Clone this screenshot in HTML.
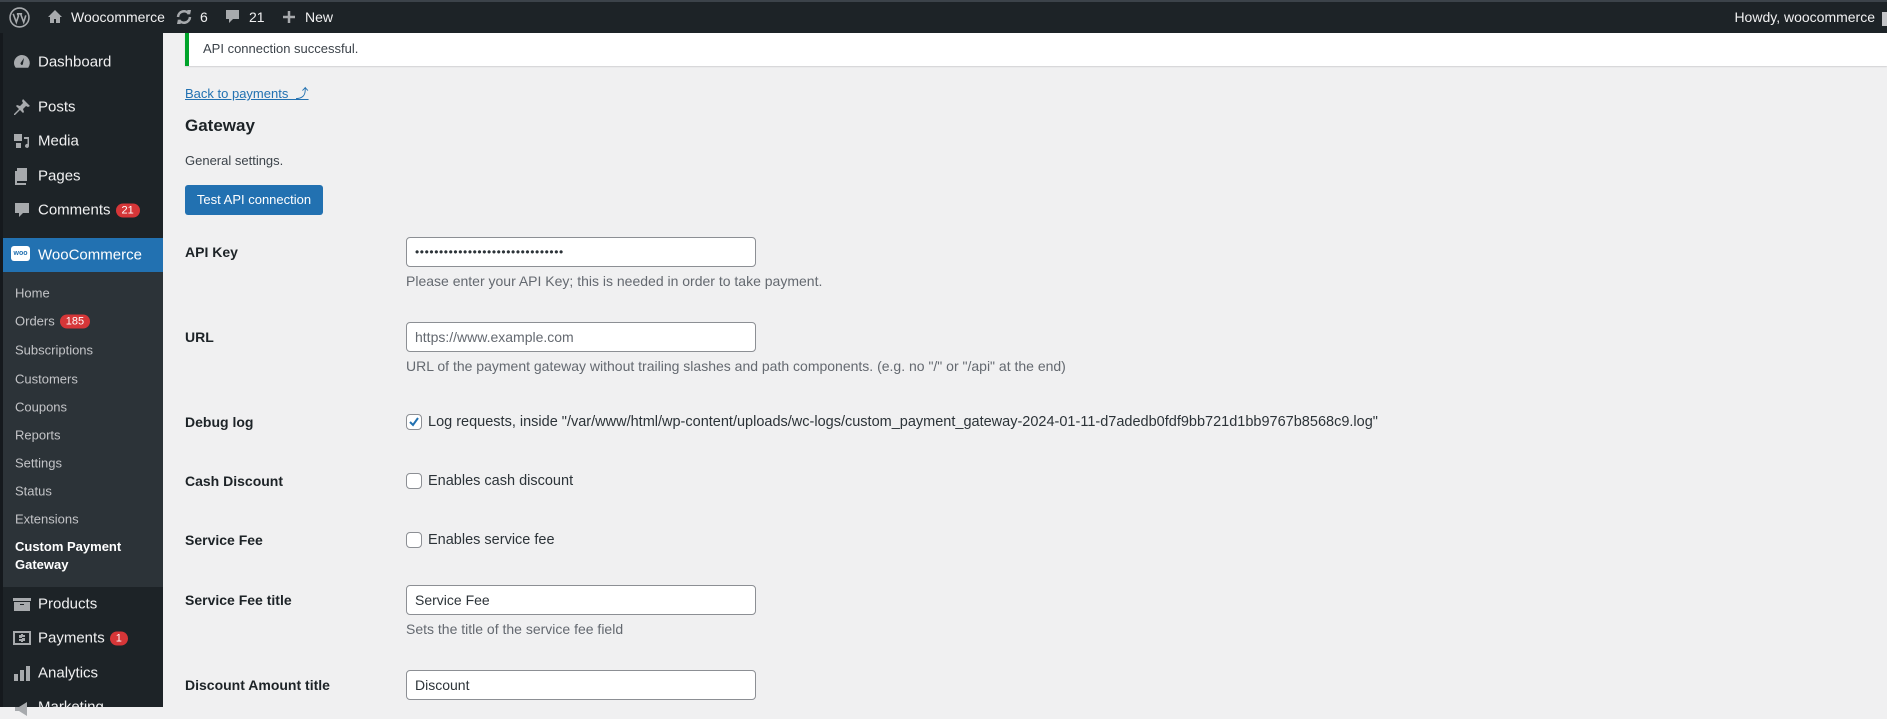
<!DOCTYPE html>
<html style="background:#f0f0f1"><head><meta charset="utf-8"><style>
*{margin:0;padding:0;box-sizing:border-box}
body{width:1887px;height:707px;overflow:hidden;background:#f0f0f1;font-family:"Liberation Sans",sans-serif;color:#1d2327;position:relative}
.abs{position:absolute;white-space:nowrap}
#top{position:absolute;left:0;top:0;width:1887px;height:33px;background:#1d2327;border-top:2px solid #3c434a;color:#f0f0f1;font-size:14px}
#side{position:absolute;left:0;top:33px;width:163px;height:674px;background:#1d2327;border-left:3px solid #15191d}
.mi{position:absolute;left:35px;color:#f0f0f1;font-size:15px;transform:translateY(-50%)}
.ic{position:absolute;left:9px;width:20px;height:20px;transform:translateY(-50%);fill:#a7aaad}
.sub{position:absolute;left:12px;color:#c3c4c7;font-size:13px;transform:translateY(-50%)}
.badge{display:inline-block;background:#d63638;color:#fff;border-radius:9px;font-size:11px;padding:1px 6px;margin-left:5px;vertical-align:1px}
.lab{position:absolute;left:185px;font-weight:bold;font-size:14px;transform:translateY(-50%)}
.inp{position:absolute;left:406px;width:350px;height:30px;background:#fff;border:1px solid #8c8f94;border-radius:4px;font-size:14px;padding:6px 8px;color:#2c3338}
.desc{position:absolute;left:406px;color:#646970;font-size:14px;transform:translateY(-50%)}
.cb{position:absolute;left:406px;width:16px;height:16px;border:1px solid #8c8f94;border-radius:4px;background:#fff;transform:translateY(-50%)}
.cbl{position:absolute;left:428px;font-size:14.5px;color:#2c3338;transform:translateY(-50%)}
</style></head><body>
<div id="top">
<svg class="abs" style="left:9px;top:5px" width="21" height="21" viewBox="0 0 20 20"><circle cx="10" cy="10" r="9" fill="none" stroke="#a7aaad" stroke-width="1.5"/><path d="M4 6.5l3 8 2-6-1-2m-0.5 0h5m-1.5 0l3 8 2-6.5" fill="none" stroke="#a7aaad" stroke-width="1.5"/></svg>
<svg class="abs" style="left:47px;top:7px" width="16" height="15" viewBox="0 0 16 15"><path d="M8 1L1 8h2v6h4v-4h2v4h4V8h2z" fill="#a7aaad"/></svg>
<span class="abs" style="left:71px;top:7px">Woocommerce</span>
<svg class="abs" style="left:175px;top:7px" width="18" height="16" viewBox="0 0 18 16"><path d="M3 8a6 6 0 0 1 11-3M15 8a6 6 0 0 1-11 3" fill="none" stroke="#a7aaad" stroke-width="2.5"/><path d="M12 1l4 0-1 5zM6 15l-4 0 1-5z" fill="#a7aaad"/></svg>
<span class="abs" style="left:200px;top:7px">6</span>
<svg class="abs" style="left:225px;top:7px" width="15" height="16" viewBox="0 0 15 16"><path d="M1 1h13v9H8l-4 4v-4H1z" fill="#a7aaad"/></svg>
<span class="abs" style="left:249px;top:7px">21</span>
<svg class="abs" style="left:282px;top:8px" width="14" height="14" viewBox="0 0 14 14"><path d="M7 1v12M1 7h12" stroke="#a7aaad" stroke-width="2.5"/></svg>
<span class="abs" style="left:305px;top:7px">New</span>
<span class="abs" style="right:12px;top:7px">Howdy, woocommerce</span>
<div class="abs" style="left:1882px;top:10px;width:8px;height:14px;background:#c3c4c7"></div>
</div>

<div id="side">
<svg class="ic" style="top:29px" viewBox="0 0 20 20"><path d="M10 3a8 8 0 0 0-8 8c0 2 .7 3.5 1.8 4.7h12.4A8 8 0 0 0 10 3zm0 10a1.5 1.5 0 0 1-1-2.6L12 6l-1 5.5A1.5 1.5 0 0 1 10 13z"/></svg>
<div class="mi" style="top:29px">Dashboard</div>
<svg class="ic" style="top:74px" viewBox="0 0 20 20"><path d="M11 2l7 7-2 1-2-1-3 3 1 3-1 1-3-3-5 5-1 0 0-1 5-5-3-3 1-1 3 1 3-3-1-2z"/></svg>
<div class="mi" style="top:74px">Posts</div>
<svg class="ic" style="top:108px" viewBox="0 0 20 20"><path d="M2 3h8v7H2zM12 6h5v9a2 2 0 1 1-1.5-2V8H12zM4 12h5v5H4z"/></svg>
<div class="mi" style="top:108px">Media</div>
<svg class="ic" style="top:143px" viewBox="0 0 20 20"><path d="M5 2h10v13H5zM3 5v14h11v-2H5V5z"/></svg>
<div class="mi" style="top:143px">Pages</div>
<svg class="ic" style="top:177px" viewBox="0 0 20 20"><path d="M3 3h14v10h-6l-4 4v-4H3z"/></svg>
<div class="mi" style="top:177px">Comments<span class="badge">21</span></div>
<div class="abs" style="left:0;top:205px;width:160px;height:34px;background:#2271b1"></div>
<div class="abs" style="left:155px;top:215px;width:0;height:0;border:7px solid transparent;border-right-color:#f0f0f1"></div>
<div class="abs" style="left:8px;top:213px;width:19px;height:15px;background:#fff;border-radius:3px;color:#2271b1;font-size:7px;font-weight:bold;text-align:center;line-height:15px">woo</div>
<div class="mi" style="top:222px;color:#fff">WooCommerce</div>
<div class="abs" style="left:0;top:239px;width:160px;height:315px;background:#2c3338"></div>
<div class="sub" style="top:260px">Home</div>
<div class="sub" style="top:288px">Orders<span class="badge">185</span></div>
<div class="sub" style="top:317px">Subscriptions</div>
<div class="sub" style="top:346px">Customers</div>
<div class="sub" style="top:374px">Coupons</div>
<div class="sub" style="top:402px">Reports</div>
<div class="sub" style="top:430px">Settings</div>
<div class="sub" style="top:458px">Status</div>
<div class="sub" style="top:486px">Extensions</div>
<div class="sub" style="top:523px;color:#fff;font-weight:bold;line-height:18px;transform:translateY(-50%)">Custom Payment<br>Gateway</div>
<svg class="ic" style="top:571px" viewBox="0 0 20 20"><path d="M1 4h18v3H1zM2 8h16v9H2zm6 2v1h4v-1z"/></svg>
<div class="mi" style="top:571px">Products</div>
<svg class="ic" style="top:605px" viewBox="0 0 20 20"><path d="M1 3h18v14H1zm2 2v10h14V5zM9 6h2v1h2v2h-3v1h3v3h-2v1H9v-1H7v-2h3v-1H7V7h2z"/></svg>
<div class="mi" style="top:605px">Payments<span class="badge">1</span></div>
<svg class="ic" style="top:640px" viewBox="0 0 20 20"><path d="M2 11h4v7H2zM8 7h4v11H8zM14 3h4v15h-4z"/></svg>
<div class="mi" style="top:640px">Analytics</div>
<svg class="ic" style="top:676px" viewBox="0 0 20 20"><path d="M3 8h4l8-5v14l-8-5H3z"/></svg>
<div class="mi" style="top:674px">Marketing</div>
</div>

<div class="abs" style="left:185px;top:33px;width:1702px;height:33px;background:#fff;border-left:4px solid #00a32a;box-shadow:0 1px 1px rgba(0,0,0,.12)"></div>
<div class="abs" style="left:203px;top:41px;font-size:13px;color:#3c434a">API connection successful.</div>
<div class="abs" style="left:185px;top:83px;font-size:13px;color:#2271b1;text-decoration:underline">Back to payments &nbsp;⤴</div>
<div class="abs" style="left:185px;top:116px;font-size:17px;font-weight:bold">Gateway</div>
<div class="abs" style="left:185px;top:153px;font-size:13px;color:#3c434a">General settings.</div>
<div class="abs" style="left:185px;top:185px;width:138px;height:30px;background:#2271b1;border-radius:3px;color:#fff;font-size:13px;line-height:30px;text-align:center">Test API connection</div>

<div class="lab" style="top:252px">API Key</div>
<div class="inp" style="top:237px;letter-spacing:0.6px;font-size:12px;padding-top:7px">•••••••••••••••••••••••••••••••</div>
<div class="desc" style="top:281px">Please enter your API Key; this is needed in order to take payment.</div>

<div class="lab" style="top:337px">URL</div>
<div class="inp" style="top:322px;color:#646970">https://www.example.com</div>
<div class="desc" style="top:366px">URL of the payment gateway without trailing slashes and path components. (e.g. no "/" or "/api" at the end)</div>

<div class="lab" style="top:422px">Debug log</div>
<div class="cb" style="top:422px"><svg width="14" height="14" viewBox="0 0 14 14" style="position:absolute;left:0;top:0"><path d="M3 7l3 3 5-7" fill="none" stroke="#2271b1" stroke-width="2"/></svg></div>
<div class="cbl" style="top:422px">Log requests, inside "/var/www/html/wp-content/uploads/wc-logs/custom_payment_gateway-2024-01-11-d7adedb0fdf9bb721d1bb9767b8568c9.log"</div>

<div class="lab" style="top:481px">Cash Discount</div>
<div class="cb" style="top:481px"></div>
<div class="cbl" style="top:481px">Enables cash discount</div>

<div class="lab" style="top:540px">Service Fee</div>
<div class="cb" style="top:540px"></div>
<div class="cbl" style="top:540px">Enables service fee</div>

<div class="lab" style="top:600px">Service Fee title</div>
<div class="inp" style="top:585px">Service Fee</div>
<div class="desc" style="top:629px">Sets the title of the service fee field</div>

<div class="lab" style="top:685px">Discount Amount title</div>
<div class="inp" style="top:670px">Discount</div>
</body></html>
